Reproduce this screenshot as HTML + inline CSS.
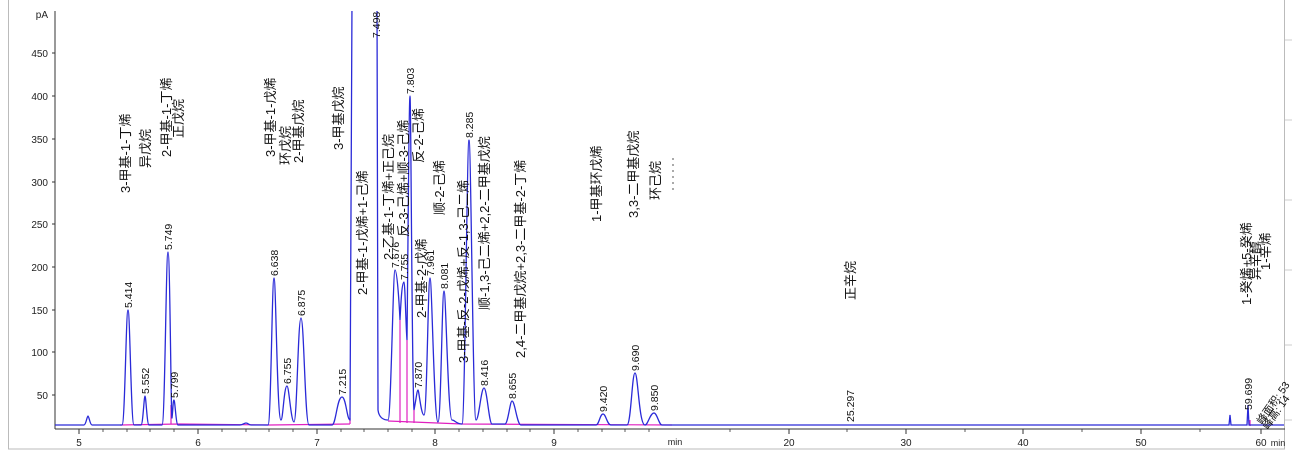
<!DOCTYPE html>
<html><head><meta charset="utf-8"><style>
html,body{margin:0;padding:0;background:#fff;}
svg{display:block;}
.cn{font-family:"Liberation Sans","Noto Sans CJK SC",sans-serif;font-size:13px;fill:#111;}
.rt{font-family:"Liberation Sans",sans-serif;font-size:10.5px;fill:#111;}
.ax{font-family:"Liberation Sans",sans-serif;font-size:10px;fill:#222;}
</style></head><body>
<svg width="1292" height="453" viewBox="0 0 1292 453" xmlns="http://www.w3.org/2000/svg">
<rect x="8.5" y="-1" width="1276" height="450" fill="none" stroke="#bbb"/>
<g stroke="#ccc"><line x1="1285" y1="40" x2="1292" y2="40"/><line x1="1285" y1="120" x2="1292" y2="120"/><line x1="1285" y1="200" x2="1292" y2="200"/><line x1="1285" y1="270" x2="1292" y2="270"/><line x1="1285" y1="345" x2="1292" y2="345"/><line x1="1285" y1="420" x2="1292" y2="420"/></g>
<g stroke="#333" stroke-width="1">
<line x1="55" y1="11" x2="55" y2="429"/>
<line x1="55" y1="429" x2="1285" y2="429"/>
<line x1="52" y1="53" x2="55" y2="53"/><line x1="52" y1="96" x2="55" y2="96"/><line x1="52" y1="139" x2="55" y2="139"/><line x1="52" y1="182" x2="55" y2="182"/><line x1="52" y1="224" x2="55" y2="224"/><line x1="52" y1="267" x2="55" y2="267"/><line x1="52" y1="310" x2="55" y2="310"/><line x1="52" y1="352" x2="55" y2="352"/><line x1="52" y1="395" x2="55" y2="395"/>
<line x1="79" y1="429" x2="79" y2="434"/><line x1="198" y1="429" x2="198" y2="434"/><line x1="317" y1="429" x2="317" y2="434"/><line x1="435" y1="429" x2="435" y2="434"/><line x1="554" y1="429" x2="554" y2="434"/>
<line x1="789" y1="429" x2="789" y2="434"/><line x1="906" y1="429" x2="906" y2="434"/><line x1="1023" y1="429" x2="1023" y2="434"/><line x1="1141" y1="429" x2="1141" y2="434"/><line x1="1261" y1="429" x2="1261" y2="434"/>
</g>
<g stroke="#333" stroke-width="0.8">
<line x1="103" y1="429" x2="103" y2="432"/><line x1="127" y1="429" x2="127" y2="432"/><line x1="150" y1="429" x2="150" y2="432"/><line x1="174" y1="429" x2="174" y2="432"/>
<line x1="222" y1="429" x2="222" y2="432"/><line x1="246" y1="429" x2="246" y2="432"/><line x1="269" y1="429" x2="269" y2="432"/><line x1="293" y1="429" x2="293" y2="432"/>
<line x1="341" y1="429" x2="341" y2="432"/><line x1="364" y1="429" x2="364" y2="432"/><line x1="388" y1="429" x2="388" y2="432"/><line x1="412" y1="429" x2="412" y2="432"/>
<line x1="459" y1="429" x2="459" y2="432"/><line x1="483" y1="429" x2="483" y2="432"/><line x1="507" y1="429" x2="507" y2="432"/><line x1="530" y1="429" x2="530" y2="432"/>
<line x1="578" y1="429" x2="578" y2="432"/><line x1="602" y1="429" x2="602" y2="432"/><line x1="625" y1="429" x2="625" y2="432"/><line x1="649" y1="429" x2="649" y2="432"/>
<line x1="730" y1="429" x2="730" y2="432"/><line x1="847" y1="429" x2="847" y2="432"/><line x1="965" y1="429" x2="965" y2="432"/><line x1="1082" y1="429" x2="1082" y2="432"/><line x1="1200" y1="429" x2="1200" y2="432"/>
</g>
<g class="ax" text-anchor="end">
<text x="48" y="18">pA</text>
<text x="48" y="57">450</text><text x="48" y="100">400</text><text x="48" y="143">350</text><text x="48" y="186">300</text><text x="48" y="228">250</text><text x="48" y="271">200</text><text x="48" y="314">150</text><text x="48" y="356">100</text><text x="48" y="399">50</text>
</g>
<g class="ax" text-anchor="middle">
<text x="79" y="446">5</text><text x="198" y="446">6</text><text x="317" y="446">7</text><text x="435" y="446">8</text><text x="554" y="446">9</text><text x="675" y="445" font-size="9">min</text>
<text x="789" y="446">20</text><text x="906" y="446">30</text><text x="1023" y="446">40</text><text x="1141" y="446">50</text><text x="1261" y="446">60</text><text x="1278" y="446" font-size="9">min</text>
</g>
<g stroke="#e020c0" stroke-width="1.2" fill="none">
<polyline points="120,425 180,424 270,425 350,424"/>
<polyline points="388,421 462,424 672,425"/>
<line x1="400" y1="320" x2="400" y2="423"/><line x1="407" y1="340" x2="407" y2="423"/><line x1="414" y1="410" x2="414" y2="423"/>
<line x1="171" y1="405" x2="171" y2="424"/><line x1="350" y1="418" x2="350" y2="424"/>
<line x1="1250" y1="420" x2="1250" y2="426"/>
</g>
<svg x="0" y="11" width="1292" height="430" viewBox="0 11 1292 430" overflow="hidden">
<path fill="none" stroke="#2a2ad8" stroke-width="1.3" d="M55,425 L84,425 C86,425 87,416 88,416 C89,416 90,425 92,425 L122,425 C125,425 126,310 128,310 C130,310 131,425 134,425 L141,425 C143,425 144,396 145,396 C146,396 147,425 149,425 L162,425 C165,425 166,252 168,252 C170,252 171,420 172,418 C173,410 173,400 174,400 C175,400 176,425 178,425 L240,425 C243,425 244,423 246,423 C248,423 249,425 251,425 L268,425 C271,425 272,278 274,278 C276,278 277,420 281,420 C283,420 284,386 287,386 C289,386 291,422 294,422 C297,422 298,318 301,318 C304,318 305,425 309,425 L332,425 C336,425 337,397 342,397 C346,397 347,420 350,420 L352,0 L377,0 L378,410 C379,418 384,420 388,420 C391,420 393,270 395,270 C397,270 399,300 400,320 C401,300 402,282 404,282 C405,282 406,330 407,340 C408,250 409,96 410,96 C411,96 412,390 414,410 C416,400 417,390 418,390 C419,390 421,415 424,415 C427,415 428,278 430,278 C432,278 434,422 438,422 C441,422 442,291 444,291 C446,291 448,420 452,420 C455,420 456,424 462,424 C465,424 467,140 469,140 C471,140 473,420 476,420 C479,420 481,388 484,388 C487,388 489,424 492,424 L505,424 C508,424 510,401 512,401 C515,401 517,425 521,425 L596,425 C599,425 600,414 603,414 C606,414 607,425 611,425 L627,425 C631,425 632,373 635,373 C638,373 639,425 645,425 C648,425 650,413 654,413 C657,413 659,425 662,425 L1229,425 L1230,415 L1231,425 L1247,425 L1248,405 L1249,425 L1284,425"/>
</svg>
<g class="rt">
<text transform="translate(132,308) rotate(-90)">5.414</text>
<text transform="translate(149,394) rotate(-90)">5.552</text>
<text transform="translate(172,250) rotate(-90)">5.749</text>
<text transform="translate(178,398) rotate(-90)">5.799</text>
<text transform="translate(278,276) rotate(-90)">6.638</text>
<text transform="translate(291,384) rotate(-90)">6.755</text>
<text transform="translate(305,316) rotate(-90)">6.875</text>
<text transform="translate(346,395) rotate(-90)">7.215</text>
<text transform="translate(380,38) rotate(-90)">7.498</text>
<text transform="translate(399,268) rotate(-90)">7.676</text>
<text transform="translate(408,280) rotate(-90)">7.755</text>
<text transform="translate(414,94) rotate(-90)">7.803</text>
<text transform="translate(422,388) rotate(-90)">7.870</text>
<text transform="translate(434,276) rotate(-90)">7.961</text>
<text transform="translate(448,289) rotate(-90)">8.081</text>
<text transform="translate(473,138) rotate(-90)">8.285</text>
<text transform="translate(488,386) rotate(-90)">8.416</text>
<text transform="translate(516,399) rotate(-90)">8.655</text>
<text transform="translate(607,412) rotate(-90)">9.420</text>
<text transform="translate(639,371) rotate(-90)">9.690</text>
<text transform="translate(658,411) rotate(-90)">9.850</text>
<text transform="translate(854,422) rotate(-90)">25.297</text>
<text transform="translate(1252,410) rotate(-90)">59.699</text>
</g>
<g class="rt" font-size="8" fill="#555">
<text transform="translate(1262,425) rotate(-55)">峰面积: 53</text>
<text transform="translate(1268,430) rotate(-55)">峰高: 14</text>
</g>
<g class="cn">
<text transform="translate(130,193) rotate(-90)">3-甲基-1-丁烯</text>
<text transform="translate(150,168) rotate(-90)">异戊烷</text>
<text transform="translate(171,157) rotate(-90)">2-甲基-1-丁烯</text>
<text transform="translate(183,138) rotate(-90)">正戊烷</text>
<text transform="translate(275,157) rotate(-90)">3-甲基-1-戊烯</text>
<text transform="translate(290,165) rotate(-90)">环戊烷</text>
<text transform="translate(303,163) rotate(-90)">2-甲基戊烷</text>
<text transform="translate(343,150) rotate(-90)">3-甲基戊烷</text>
<text transform="translate(367,295) rotate(-90)">2-甲基-1-戊烯+1-己烯</text>
<text transform="translate(393,260) rotate(-90)">2-乙基-1-丁烯+正己烷</text>
<text transform="translate(408,237) rotate(-90)">反-3-己烯+顺-3-己烯</text>
<text transform="translate(423,163) rotate(-90)">反-2-己烯</text>
<text transform="translate(426,318) rotate(-90)">2-甲基-2-戊烯</text>
<text transform="translate(444,215) rotate(-90)">顺-2-己烯</text>
<text transform="translate(468,363) rotate(-90)">3-甲基-反-2-戊烯+反-1,3-己二烯</text>
<text transform="translate(489,310) rotate(-90)">顺-1,3-己二烯+2,2-二甲基戊烷</text>
<text transform="translate(525,358) rotate(-90)">2,4-二甲基戊烷+2,3-二甲基-2-丁烯</text>
<text transform="translate(601,222) rotate(-90)">1-甲基环戊烯</text>
<text transform="translate(638,218) rotate(-90)">3,3-二甲基戊烷</text>
<text transform="translate(660,200) rotate(-90)">环己烷</text>
<text transform="translate(855,300) rotate(-90)">正辛烷</text>
<text transform="translate(1251,305) rotate(-90)">1-癸烯+5-癸烯</text>
<text transform="translate(1260,280) rotate(-90)">异辛醇</text>
<text transform="translate(1270,270) rotate(-90)">1-辛烯</text>
</g>
<g stroke="#555" stroke-dasharray="2,4"><line x1="673" y1="158" x2="673" y2="192"/></g>
</svg>
</body></html>
